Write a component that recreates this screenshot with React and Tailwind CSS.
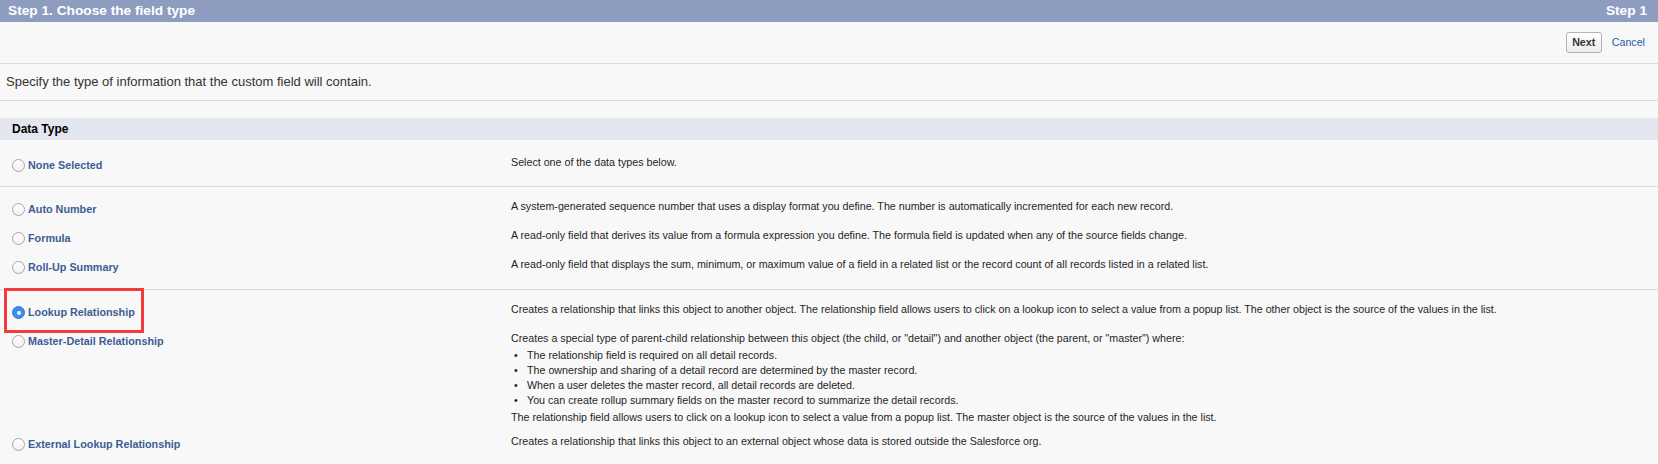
import React from "react";

function Radio({ checked }) {
  if (checked) {
    return (
      <span className="w-[13px] h-[13px] rounded-full bg-[#3a8cf0] border border-[#2f7ddc] flex items-center justify-center shrink-0">
        <span className="w-[4px] h-[4px] rounded-full bg-white" />
      </span>
    );
  }
  return (
    <span className="w-[13px] h-[13px] rounded-full border border-[#a6a6a6] bg-gradient-to-b from-white to-[#f2f2f2] shrink-0" />
  );
}

function Row({ label, checked, highlight, children }) {
  return (
    <div className="flex">
      <div className="relative w-[511px] shrink-0 h-[29px] flex items-center pl-[12px]">
        <Radio checked={checked} />
        <span className="ml-[3px] text-[10.8px] font-bold text-[#3d5d92]">{label}</span>
        {highlight && (
          <span className="absolute left-[4px] top-[-10px] w-[140px] h-[45px] border-[3px] border-[#f23c3c]" />
        )}
      </div>
      <div className="pt-[4px] pb-[5px] text-[10.7px] leading-[15px] text-[#1f1f1f]">
        {children}
      </div>
    </div>
  );
}

function Bullet({ children }) {
  return (
    <div className="flex">
      <span className="w-[13px] ml-[3px] shrink-0">•</span>
      <span>{children}</span>
    </div>
  );
}

export default function App() {
  return (
    <div className="min-h-screen bg-[#f8f8f8] font-['Liberation_Sans',Arial,sans-serif] text-[#222]">
      <div className="h-[22px] bg-[#8e9dbf] flex items-center justify-between pl-[8px] pr-[11px] text-white font-bold text-[13.7px]">
        <span>Step 1. Choose the field type</span>
        <span>Step 1</span>
      </div>

      <div className="h-[42px] flex items-center justify-end pr-[13px] border-b border-[#dcdcdc]">
        <button className="h-[21px] w-[36px] rounded-[3px] border border-[#b4b4b4] bg-gradient-to-b from-white to-[#ececec] text-[10.7px] font-bold text-[#333]">
          Next
        </button>
        <a className="ml-[10px] text-[10.7px] text-[#1b5ea6]">Cancel</a>
      </div>

      <div className="h-[37px] flex items-center pl-[6px] border-b border-[#dcdcdc] text-[13px] text-[#333]">
        Specify the type of information that the custom field will contain.
      </div>

      <div className="h-[17px]" />

      <div className="h-[22px] bg-[#e3e6ee] flex items-center pl-[12px] text-[12px] font-bold text-black">
        Data Type
      </div>

      <div className="pt-[11px] pb-[6px] border-b border-[#dcdcdc]">
        <Row label="None Selected">Select one of the data types below.</Row>
      </div>

      <div className="pt-[8px] pb-[7px] border-b border-[#dcdcdc]">
        <Row label="Auto Number">
          A system-generated sequence number that uses a display format you define. The number is automatically incremented for each new record.
        </Row>
        <Row label="Formula">
          A read-only field that derives its value from a formula expression you define. The formula field is updated when any of the source fields change.
        </Row>
        <Row label="Roll-Up Summary">
          A read-only field that displays the sum, minimum, or maximum value of a field in a related list or the record count of all records listed in a related list.
        </Row>
      </div>

      <div className="pt-[8px]">
        <Row label="Lookup Relationship" checked highlight>
          Creates a relationship that links this object to another object. The relationship field allows users to click on a lookup icon to select a value from a popup list. The other object is the source of the values in the list.
        </Row>
        <Row label="Master-Detail Relationship">
          <div>
            Creates a special type of parent-child relationship between this object (the child, or "detail") and another object (the parent, or "master") where:
          </div>
          <div className="mt-[2px]">
            <Bullet>The relationship field is required on all detail records.</Bullet>
            <Bullet>The ownership and sharing of a detail record are determined by the master record.</Bullet>
            <Bullet>When a user deletes the master record, all detail records are deleted.</Bullet>
            <Bullet>You can create rollup summary fields on the master record to summarize the detail records.</Bullet>
          </div>
          <div className="mt-[2px]">
            The relationship field allows users to click on a lookup icon to select a value from a popup list. The master object is the source of the values in the list.
          </div>
        </Row>
        <Row label="External Lookup Relationship">
          Creates a relationship that links this object to an external object whose data is stored outside the Salesforce org.
        </Row>
      </div>
    </div>
  );
}
